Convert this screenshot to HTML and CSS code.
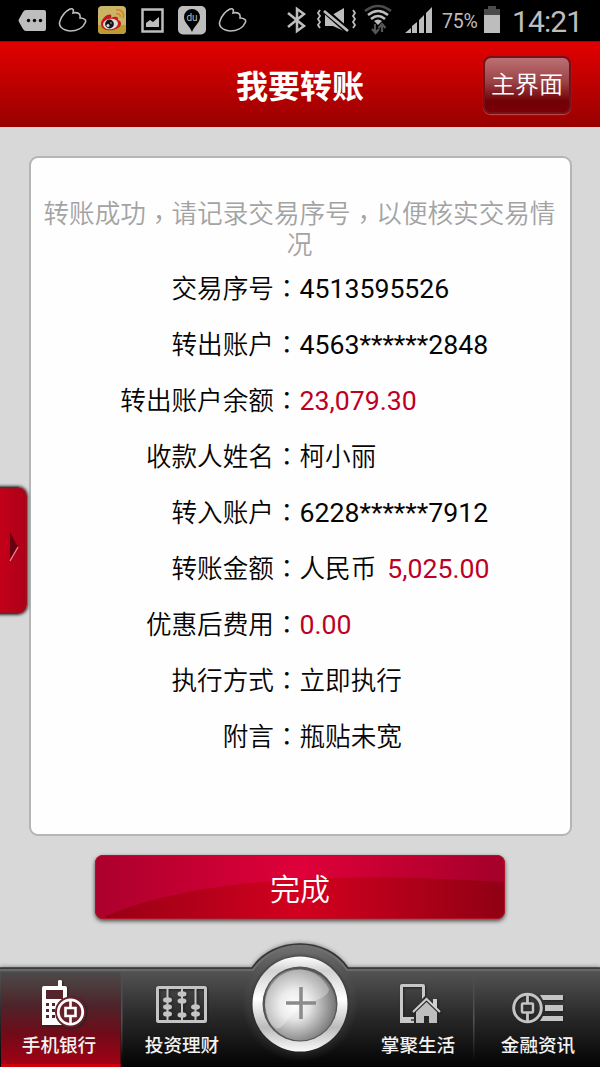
FILE: index.html
```html
<!DOCTYPE html>
<html lang="zh-CN">
<head>
    <meta charset="UTF-8">
    <title>我要转账</title>
    <link rel="stylesheet" href="styles.css">
</head>
<body>

<div class="status-bar">
    <svg class="chat" width="28" height="41" viewBox="0 0 28 41">
        <path d="M8 10H26Q28 10 28 12V29Q28 31 26 31H8Q6 31 5 29L1 22Q0 20.500 1 19L5 12Q6 10 8 10Z" fill="#bdbdbd"/>
        <circle cx="10.500" cy="20.500" r="1.700"/><circle cx="16.500" cy="20.500" r="1.700"/><circle cx="22.500" cy="20.500" r="1.700"/>
    </svg>
    <svg class="cloud" width="30" height="41" viewBox="0 0 30 41">
        <path d="M12 31C4 30 0 26 2 21C4 15 8 11 12 9C15 8 16 10 15 13C19 12 23 13 22 18C26 18 29 20 27 23C25 28 19 31 12 31Z" fill="none" stroke="#bdbdbd" stroke-width="1.600"/>
    </svg>
    <svg class="weibo" width="28" height="41" viewBox="0 0 28 41">
        <rect y="6" width="28" height="28" rx="4" fill="#c8b565"/>
        <path d="M0 25H28V30Q28 34 24 34H4Q0 34 0 30Z" fill="#bd9b31"/>
        <path d="M3 24C3 19 10 13 13 15C14 16 13 17 13 18C17 16 21 16 20 20C24 21 24 26 20 28C14 32 3 31 3 24Z" fill="#c51a19"/>
        <ellipse cx="12.500" cy="24" rx="7.500" ry="5.300" fill="#ddd" transform="rotate(-8 12.500 24)"/>
        <circle cx="11.500" cy="24" r="4.400" fill="#151515"/>
        <circle cx="10" cy="25.500" r="1.500" fill="#ddd"/><circle cx="13" cy="23" r=".7" fill="#ddd"/>
        <path d="M18 10C23 9 27 13 25 18M18 14C21 13 23 15 22 17" fill="none" stroke="#d78124" stroke-width="1.600"/>
    </svg>
    <svg class="photo" width="23" height="41" viewBox="0 0 23 41">
        <path d="M1.500 9.500H21.500V31.500H1.500Z" fill="none" stroke="#bdbdbd" stroke-width="2.500"/>
        <path d="M5 27V23L9 20L12 22L18 17V27Z" fill="#bdbdbd"/>
    </svg>
    <svg class="du" width="28" height="41" viewBox="0 0 28 41">
        <rect y="6" width="28" height="28.500" rx="5" fill="#bdbdbd"/>
        <path d="M14 32C12 26 6 23 6 17A8 8 0 0 1 22 17C22 23 16 26 14 32Z"/>
        <text x="14" y="20.500" text-anchor="middle">du</text>
    </svg>
    <svg class="cloud2" width="30" height="41" viewBox="0 0 30 41">
        <path d="M12 31C4 30 0 26 2 21C4 15 8 11 12 9C15 8 16 10 15 13C19 12 23 13 22 18C26 18 29 20 27 23C25 28 19 31 12 31Z" fill="none" stroke="#bdbdbd" stroke-width="1.600"/>
    </svg>
    <svg class="bluetooth" width="20" height="41" viewBox="0 0 20 41">
        <path d="M1 13L17 26L10 31V9L17 14L1 27" fill="none" stroke="#bdbdbd" stroke-width="2.500"/>
    </svg>
    <svg class="mute" width="41" height="41" viewBox="0 0 41 41">
        <path d="M9 15H16L28 8V31L17 26H9Z" fill="#bdbdbd"/>
        <path d="M7 9L33 32" stroke="#000" stroke-width="6"/>
        <path d="M8 11L32 31" stroke="#bdbdbd" stroke-width="2.800"/>
        <path d="M4 10L2 13L4 16L2 19L4 22L2 25L4 28M37 10L39 13L37 16L39 19L37 22L39 25L37 28" fill="none" stroke="#bdbdbd" stroke-width="1.800"/>
    </svg>
    <svg class="wifi" width="28" height="41" viewBox="0 0 28 41">
        <path d="M1 11Q14 1 27 11" fill="none" stroke="#4b4b4b" stroke-width="2.500"/>
        <path d="M4 15Q14 7 24 15M7 19Q14 13 21 19" fill="none" stroke="#bdbdbd" stroke-width="2.500"/>
        <path d="M10 21Q14 18 18 21L14 25Z" fill="#bdbdbd"/>
        <path d="M11 24V32M8 29L11.500 33L15 29M18 32V24M14.500 28L18 24L21.500 28" fill="none" stroke="#555" stroke-width="2.200"/>
    </svg>
    <svg class="signal" width="28" height="41" viewBox="0 0 28 41">
        <path d="M0 33L6 28V33ZM7 33V26L12 22V33ZM14 33V20L19 15V33ZM21 33V13L27 7V33Z" fill="#bdbdbd"/>
    </svg>
    <span class="percent">75%</span>
    <svg class="battery" width="18" height="41" viewBox="0 0 18 41">
        <path d="M5 6H13V9H17V15H1V9H5Z" fill="#4b4b4b"/>
        <path d="M1 15H17V33H1Z" fill="#bdbdbd"/>
    </svg>
    <span class="time">14:21</span>
</div>

<header class="header">
    <h1>我要转账</h1>
    <button class="home-button">主界面</button>
</header>

<main class="content">
    <section class="card">
        <p class="message">转账成功<span class="comma" lang="zh-TW">，</span>请记录交易序号<span class="comma" lang="zh-TW">，</span>以便核实交易情况</p>
        <dl class="details">
            <dt>交易序号<i lang="zh-TW">：</i></dt>
            <dd><span class="number">4513595526</span></dd>
            <dt>转出账户<i lang="zh-TW">：</i></dt>
            <dd><span class="number">4563******2848</span></dd>
            <dt>转出账户余额<i lang="zh-TW">：</i></dt>
            <dd><span class="number red">23,079.30</span></dd>
            <dt>收款人姓名<i lang="zh-TW">：</i></dt>
            <dd>柯小丽</dd>
            <dt>转入账户<i lang="zh-TW">：</i></dt>
            <dd><span class="number">6228******7912</span></dd>
            <dt>转账金额<i lang="zh-TW">：</i></dt>
            <dd>人民币<span class="number red amount">5,025.00</span></dd>
            <dt>优惠后费用<i lang="zh-TW">：</i></dt>
            <dd><span class="number red">0.00</span></dd>
            <dt>执行方式<i lang="zh-TW">：</i></dt>
            <dd>立即执行</dd>
            <dt>附言<i lang="zh-TW">：</i></dt>
            <dd>瓶贴未宽</dd>
        </dl>
    </section>

    <button class="done-button">
        <svg class="shine" viewBox="0 0 410 64" preserveAspectRatio="none">
            <defs>
                <linearGradient id="done-top">
                    <stop offset="0" stop-color="#ac002c"/>
                    <stop offset=".5" stop-color="#df003a"/>
                    <stop offset="1" stop-color="#a4002a"/>
                </linearGradient>
                <linearGradient id="done-bottom" gradientUnits="userSpaceOnUse" x1="0" y1="0" x2="410" y2="0">
                    <stop offset="0" stop-color="#950015"/>
                    <stop offset=".5" stop-color="#d3001f"/>
                    <stop offset="1" stop-color="#900014"/>
                </linearGradient>
            </defs>
            <rect width="410" height="64" fill="url(#done-top)"/>
            <path d="M10 62C110 18 270 18 410 27V64H10Z" fill="url(#done-bottom)"/>
        </svg>
        <span>完成</span>
    </button>

    <div class="drawer">
        <svg width="10" height="30" viewBox="0 0 10 30">
            <path d="M1 0L9 15L1 27Z" fill="#680010"/>
            <path d="M9 15L1 29" stroke="#e18a94" stroke-width="1.300"/>
        </svg>
    </div>
</main>

<nav class="tabs">
    <svg class="tabs-bg" width="600" height="131" viewBox="0 936 600 131">
        <defs>
            <linearGradient id="bar" gradientUnits="userSpaceOnUse" x1="0" y1="940" x2="0" y2="1067">
                <stop offset="0" stop-color="#777"/>
                <stop offset=".23" stop-color="#555"/>
                <stop offset=".6" stop-color="#292929"/>
                <stop offset="1" stop-color="#030303"/>
            </linearGradient>
            <linearGradient id="active" x1="0" y1="0" x2="0" y2="1">
                <stop offset="0" stop-color="#4c4a4a"/>
                <stop offset=".35" stop-color="#4d2429"/>
                <stop offset=".65" stop-color="#700b19"/>
                <stop offset="1" stop-color="#a60013"/>
            </linearGradient>
            <linearGradient id="ring" x1="0" y1="0" x2="0" y2="1">
                <stop offset="0" stop-color="#fff"/>
                <stop offset=".15" stop-color="#d2d2d2"/>
                <stop offset=".45" stop-color="#fff"/>
                <stop offset=".75" stop-color="#bbb"/>
                <stop offset="1" stop-color="#fafafa"/>
            </linearGradient>
            <radialGradient id="ball" cx=".42" cy=".5" r=".6">
                <stop offset="0" stop-color="#fff"/>
                <stop offset=".35" stop-color="#e4e4e4"/>
                <stop offset="1" stop-color="#707070"/>
            </radialGradient>
            <radialGradient id="halo">
                <stop offset=".7" stop-color="#888" stop-opacity=".9"/>
                <stop offset="1" stop-color="#777" stop-opacity="0"/>
            </radialGradient>
            <linearGradient id="divider" x1="0" y1="0" x2="0" y2="1">
                <stop offset="0" stop-color="#666" stop-opacity="0"/>
                <stop offset=".5" stop-color="#555"/>
                <stop offset="1" stop-color="#444" stop-opacity="0"/>
            </linearGradient>
        </defs>
        <path class="bar" d="M0 968H252C263 952 281 944 300 944S337 952 348 968H600V1067H0Z" fill="url(#bar)"/>
        <path d="M0 970H253C264 954 282 946.500 300 946.500S336 954 347 970H600" fill="none" stroke="#707070" stroke-width="1.500"/>
        <path d="M0 968H252C263 952 281 944 300 944S337 952 348 968H600" fill="none" stroke="#343434" stroke-width="1.500"/>
        <rect x="1" y="972" width="119.500" height="95" fill="url(#active)"/>
        <rect x="1" y="1064" width="119.500" height="3" fill="#cf0009"/>
        <rect x="121" y="976" width="1.500" height="86" fill="url(#divider)"/>
        <rect x="473" y="976" width="1.500" height="86" fill="url(#divider)"/>
        <circle cx="300" cy="1004" r="58" fill="url(#halo)" opacity=".35"/>
        <circle class="ring" cx="300" cy="1004" r="47.500" fill="url(#ring)"/>
        <circle cx="300" cy="1004" r="37.500" fill="#555"/>
        <circle cx="300.500" cy="1005" r="35.500" fill="url(#ball)"/>
        <path d="M269 1021C281 1039 283 1020 297 1011C308 1001 329 999 329 989C313 957 263 965 265 1006Z" fill="#fff" opacity=".3"/>
        <path d="M301 987V1019M286 1003H316" stroke="#8b8b8b" stroke-width="3.500"/>
    </svg>
    <a class="tab">
        <svg width="60" height="50" viewBox="29 979 60 50">
            <path d="M42 988Q42 986 44 986H58V981Q58 980 60 980T62 981V986H65Q67 986 67 988V1025H42Z" fill="#fff"/>
            <path d="M46 990H63V999H46ZM46 1003H49V1006H46ZM52 1003H55V1006H52ZM58 1003H61V1006H58ZM46 1009H49V1012H46ZM52 1009H55V1012H52ZM46 1015H49V1018H46ZM52 1015H55V1018H52Z" fill="#54252a"/>
            <circle cx="70.500" cy="1012" r="15.500" fill="#682029"/>
            <circle cx="70.500" cy="1012" r="12.200" fill="none" stroke="#fff" stroke-width="2.800"/>
            <path d="M65.500 1008H75.500V1016H65.500ZM70.500 999V1008M70.500 1016V1025" fill="none" stroke="#fff" stroke-width="2.600"/>
        </svg>
        <span>手机银行</span>
    </a>
    <a class="tab">
        <svg width="60" height="50" viewBox="152 979 60 50">
            <g fill="none" stroke="#c4c4c4">
                <rect x="157.500" y="987.500" width="48" height="34" rx="1" stroke-width="3"/>
                <path d="M167.500 988V1021M182 988V1021M195.500 988V1021" stroke-width="2"/>
            </g>
            <g fill="#c4c4c4">
                <ellipse cx="167.500" cy="1000" rx="4.500" ry="2.700"/><ellipse cx="167.500" cy="1007" rx="4.500" ry="2.700"/><ellipse cx="167.500" cy="1014" rx="4.500" ry="2.700"/>
                <ellipse cx="182" cy="994" rx="4.500" ry="2.700"/><ellipse cx="182" cy="1001" rx="4.500" ry="2.700"/><ellipse cx="182" cy="1015" rx="4.500" ry="2.700"/>
                <ellipse cx="195.500" cy="1007" rx="4.500" ry="2.700"/><ellipse cx="195.500" cy="1014" rx="4.500" ry="2.700"/>
            </g>
        </svg>
        <span>投资理财</span>
    </a>
    <a class="tab plus" aria-label="+"></a>
    <a class="tab">
        <svg width="60" height="50" viewBox="388 979 60 50">
            <path d="M400 986Q400 984 402 984H423Q425 984 425 986V996L422 999V987H403V1017H414V1023H400Z" fill="#c8c8c8"/>
            <path d="M411 1020H415" stroke="#333" stroke-width="1.500"/>
            <path d="M433 999H437V1009L433 1005Z" fill="#cfcfcf"/>
            <path d="M413 1012L426.500 999L440 1012" fill="none" stroke="#cfcfcf" stroke-width="2"/>
            <path d="M416 1012L426.500 1002L437 1012V1023H429V1016H424V1023H416Z" fill="#bebebe"/>
        </svg>
        <span>掌聚生活</span>
    </a>
    <a class="tab">
        <svg width="60" height="50" viewBox="508 979 60 50">
            <g fill="none" stroke="#c4c4c4">
                <circle cx="527.500" cy="1008" r="13.800" stroke-width="3"/>
                <rect x="522" y="1003.500" width="11" height="9" rx="1" stroke-width="2.500"/>
                <path d="M527.500 994V1003M527.500 1013V1022" stroke-width="2.800"/>
            </g>
            <path d="M540 995H563V1000H543ZM545 1005H563V1011H545ZM543 1016H563V1021H540Z" fill="#c4c4c4"/>
        </svg>
        <span>金融资讯</span>
    </a>
</nav>

</body>
</html>
```
FILE: styles.css
```css
* {
    box-sizing: border-box;
}

body {
    margin: 0;
    width: 600px;
    height: 1067px;
    overflow: hidden;
    display: flex;
    flex-direction: column;
    background-color: #d8d8d8;
    font-family: "Noto Sans CJK SC", sans-serif;
}

button {
    font-family: inherit;
    border: none;
    padding: 0;
    color: white;
}

.status-bar {
    height: 41px;
    flex: none;
    display: flex;
    padding-left: 18px;
    background-color: #000;
    color: #bdbdbd;
    font-family: Roboto, sans-serif;
}

.status-bar svg {
    flex: none;
}

.cloud {
    margin-left: 12px;
}

.weibo {
    margin-left: 10px;
}

.photo {
    margin-left: 15px;
}

.du {
    margin-left: 14px;
}

.du text {
    font: 10px Roboto, sans-serif;
    fill: #bdbdbd;
}

.cloud2 {
    margin-left: 12px;
}

.bluetooth {
    margin-left: 39px;
}

.mute {
    margin-left: 9px;
}

.wifi {
    margin-left: 7px;
}

.signal {
    margin-left: 13px;
}

.percent {
    width: 40px;
    margin-left: 9px;
    font-size: 19.5px;
    letter-spacing: -0.2px;
    line-height: 43px;
}

.battery {
    margin-left: 1px;
}

.time {
    margin-left: 11px;
    font-size: 30px;
    letter-spacing: -0.9px;
    line-height: 44px;
}

.header {
    height: 86px;
    flex: none;
    display: grid;
    grid-template-columns: 117px 1fr 117px;
    align-items: center;
    background: linear-gradient(#e00000, #d80000 15%, #980000);
    border-top: 1px solid #a80000;
}

.header h1 {
    grid-column: 2;
    margin: 0 0 2px;
    color: white;
    font-size: 32px;
    line-height: 40px;
    text-align: center;
}

.home-button {
    width: 88px;
    height: 58px;
    padding-bottom: 4px;
    border: 2px solid #711319;
    border-radius: 8px;
    background: linear-gradient(#bc7073, #9a4145 45%, #720006 80%, #780006);
    box-shadow: 0 1px 1px #c94b4b;
    font-size: 24px;
    font-weight: 350;
}

.content {
    position: relative;
    height: 840px;
    flex: none;
    padding-top: 29px;
    display: flex;
    flex-direction: column;
    align-items: center;
}

.card {
    width: 543px;
    height: 680px;
    flex: none;
    padding-top: 38px;
    background-color: #fefefe;
    border: 2px solid #b5b5b5;
    border-radius: 9px;
    font-size: 25.6px;
    font-weight: 350;
}

.message {
    width: 516px;
    margin: 0 auto 1px 11px;
    color: #a3a3a3;
    line-height: 31px;
    text-align: center;
}

.comma {
    font-family: "Noto Sans CJK TC", sans-serif;
    line-height: 0;
    vertical-align: -6px;
}

.details {
    display: grid;
    grid-template-columns: 269px 1fr;
    grid-auto-rows: 56px;
    margin: 0;
    line-height: 56px;
    color: #050505;
}

.details dt {
    text-align: right;
}

.details dt i {
    font-family: "Noto Sans CJK TC", sans-serif;
    font-style: normal;
}

.details dd {
    margin: 0;
}

.number {
    font-family: Roboto, sans-serif;
    font-size: 26.67px;
    font-weight: 400;
}

.red {
    color: #bd0023;
}

.amount {
    margin-left: 11px;
}

.done-button {
    position: relative;
    width: 410px;
    height: 64px;
    flex: none;
    margin-top: 19px;
    border-radius: 8px;
    background-color: #c00024;
    box-shadow: 0 2px 4px #444;
    font-size: 30px;
    font-weight: 350;
}

.shine {
    position: absolute;
    top: 0;
    left: 0;
    width: 100%;
    height: 100%;
    border: 1px solid #ae1422;
    border-radius: 8px;
}

.done-button span {
    position: relative;
}

/* pull-out handle over the left edge */
.drawer {
    position: absolute;
    left: -2px;
    top: 360px;
    width: 29px;
    height: 127px;
    padding: 43px 0 0 9px;
    border: 2px solid #9c101b;
    border-radius: 0 9px 9px 0;
    background: linear-gradient(90deg, #c40019, #ae0019);
    box-shadow: 0 0 3px 1px #333;
}

.tabs {
    position: relative;
    height: 100px;
    flex: none;
    display: grid;
    grid-template-columns: 118px 128px 114px 116px 124px;
}

.tabs-bg {
    position: absolute;
    left: 0;
    bottom: 0;
}

.bar {
    filter: drop-shadow(0 -1px 2px #777);
}

.ring {
    filter: drop-shadow(0 0 2px #222);
}

.tab {
    position: relative;
    padding-top: 12px;
    display: flex;
    flex-direction: column;
    align-items: center;
    color: #f2f2f2;
    font-size: 18.6px;
    font-weight: 500;
    line-height: 30px;
}

.tab svg {
    flex: none;
    filter: drop-shadow(1px 1px 1px #222);
}
```
